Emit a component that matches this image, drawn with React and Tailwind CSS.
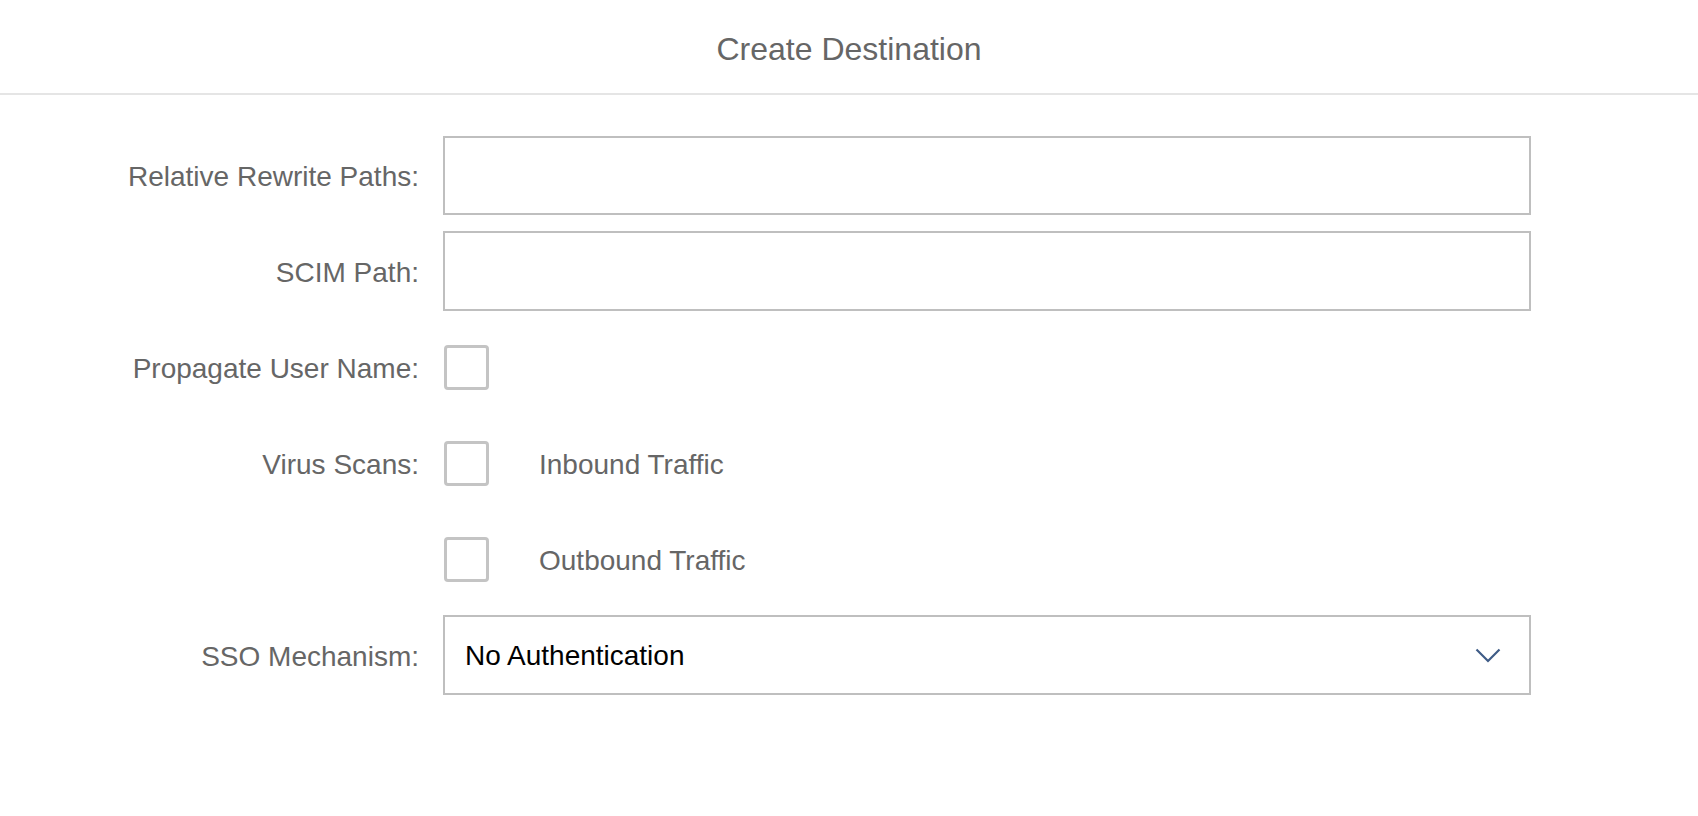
export default function App() {
  const font = { fontFamily: '"Liberation Sans", Arial, sans-serif' };
  const Label = ({ children }) => (
    <div className="w-[443px] shrink-0 pr-[24px] pt-[4px] text-right text-[28px] text-[#666666]">
      {children}
    </div>
  );
  const Box = () => (
    <div className="ml-[1px] h-[45px] w-[45px] shrink-0 rounded-[4px] border-[3px] border-[#c4c4c4] bg-white" />
  );
  return (
    <div className="min-h-[816px] w-full bg-white" style={font}>
      <div className="flex h-[95px] items-center justify-center border-b-2 border-[#e5e5e5] pt-[4px]">
        <h1 className="text-[32px] text-[#666666]">Create Destination</h1>
      </div>
      <div className="pt-[32px]">
        <div className="flex h-[96px] items-center">
          <Label>Relative Rewrite Paths:</Label>
          <div className="h-[79px] w-[1088px] border-2 border-[#bfbfbf] bg-white" />
        </div>
        <div className="flex h-[96px] items-center">
          <Label>SCIM Path:</Label>
          <div className="h-[80px] w-[1088px] border-2 border-[#bfbfbf] bg-white" />
        </div>
        <div className="flex h-[96px] items-center">
          <Label>Propagate User Name:</Label>
          <Box />
        </div>
        <div className="flex h-[96px] items-center">
          <Label>Virus Scans:</Label>
          <Box />
          <span className="ml-[50px] pt-[4px] text-[28px] text-[#666666]">Inbound Traffic</span>
        </div>
        <div className="flex h-[96px] items-center">
          <Label></Label>
          <Box />
          <span className="ml-[50px] pt-[4px] text-[28px] text-[#666666]">Outbound Traffic</span>
        </div>
        <div className="flex h-[96px] items-center">
          <Label>SSO Mechanism:</Label>
          <div className="flex h-[80px] w-[1088px] items-center justify-between border-2 border-[#bfbfbf] bg-white pl-[20px] pr-[28px]">
            <span className="pt-[2px] text-[28px] text-black">No Authentication</span>
            <svg width="26" height="15" viewBox="0 0 26 15" fill="none">
              <path d="M1.5 1.5 L13 13 L24.5 1.5" stroke="#3f5c87" strokeWidth="2.2" />
            </svg>
          </div>
        </div>
      </div>
    </div>
  );
}
